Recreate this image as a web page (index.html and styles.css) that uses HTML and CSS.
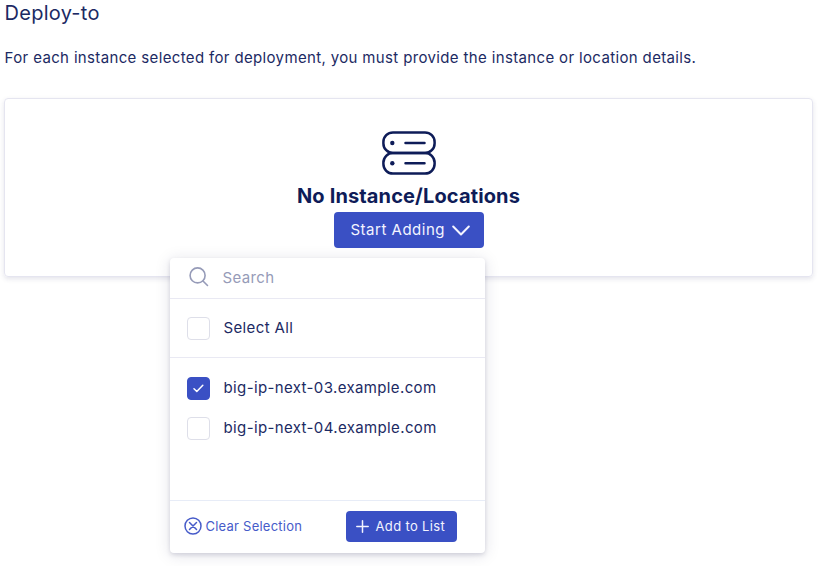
FILE: index.html
```html
<!DOCTYPE html>
<html lang="en">
<head>
<meta charset="utf-8">
<title>Deploy-to</title>
<link rel="stylesheet" href="styles.css">
</head>
<body>
<main class="page">
  <h1 class="title"><span>Deploy-to</span></h1>
  <p class="description"><span>For each instance selected for deployment, you must provide the instance or location details.</span></p>
  <section class="card">
    <svg class="server-icon" viewBox="0 0 54 44" fill="none" stroke="currentColor" stroke-width="2.5" stroke-linecap="round">
      <rect x="1.4" y="1.4" width="51.2" height="20.6" rx="9.6"/>
      <rect x="1.4" y="22" width="51.2" height="20.6" rx="9.6"/>
      <path d="M23.5 12H42.5M23.5 32.3H42.5"/>
      <circle cx="10.3" cy="12" r="2.2" fill="currentColor" stroke="none"/>
      <circle cx="10.3" cy="32.3" r="2.2" fill="currentColor" stroke="none"/>
    </svg>
    <h2 class="empty-title"><span>No Instance/Locations</span></h2>
    <div class="dropdown">
      <button class="button start"><span>Start Adding</span>
        <svg width="18" height="12" viewBox="0 0 18 12" fill="none" stroke="currentColor" stroke-width="2" stroke-linecap="round" stroke-linejoin="round"><path d="M1.2 2.5L9 10.5L16.8 2.5"/></svg>
      </button>
      <div class="menu">
        <div class="search">
          <svg width="20" height="20" viewBox="0 0 20 20" fill="none" stroke="currentColor" stroke-width="1.6" stroke-linecap="round"><circle cx="8.6" cy="8.4" r="7.5"/><path d="M14 14L18.5 18.5"/></svg>
          <span>Search</span>
        </div>
        <div class="all option"><span class="box"></span><span class="label-all">Select All</span></div>
        <div class="options">
          <div class="option"><span class="box checked"><svg width="11" height="9" viewBox="0 0 11 9" fill="none" stroke="currentColor" stroke-width="1.5" stroke-linecap="round" stroke-linejoin="round"><path d="M1 4.8L3.8 7.5L9.8 1.2"/></svg></span><span class="label">big-ip-next-03.example.com</span></div>
          <div class="option"><span class="box"></span><span class="label">big-ip-next-04.example.com</span></div>
        </div>
        <div class="footer">
          <button class="clear"><svg width="18" height="18" viewBox="0 0 18 18" fill="none" stroke="currentColor" stroke-width="1.5" stroke-linecap="round"><circle cx="9" cy="9" r="8"/><path d="M5.5 5.5L12.5 12.5M12.5 5.5L5.5 12.5"/></svg><span>Clear Selection</span></button>
          <button class="button add"><svg width="13" height="13" viewBox="0 0 13 13" fill="none" stroke="currentColor" stroke-width="1.5" stroke-linecap="round"><path d="M6.5 .8V12.2M.8 6.5H12.2"/></svg><span>Add to List</span></button>
        </div>
      </div>
    </div>
  </section>
</main>
</body>
</html>
```
FILE: styles.css
```css
* { box-sizing: border-box; }
body { margin: 0; background: #fff; color: #1c2a63; font-family: Inter, sans-serif; font-size: 15px; }
svg { display: block; flex: none; }
button { border: 0; padding: 0; font: inherit; background: none; }
.page { width: 819px; height: 566px; padding: 0 6px 0 4px; overflow: hidden; }
.title { margin: 0; padding-left: .6px; height: 26px; line-height: 26px; font-size: 20px; font-weight: 400; letter-spacing: .25px; }
.description { margin: 20px 0 0; padding-left: .6px; height: 24px; line-height: 24px; white-space: nowrap; letter-spacing: .355px; }
.card { height: 179px; margin-top: 28px; border: 1px solid #e5e5f0; border-radius: 4px; box-shadow: 0 2px 5px rgba(30, 30, 90, .12); display: flex; flex-direction: column; align-items: center; padding-top: 32px; }
.server-icon { width: 54px; height: 44px; color: #0e1c58; }
.empty-title { margin: 8px 0 3px; height: 26px; line-height: 26px; font-size: 20px; font-weight: 700; color: #0e1c58; letter-spacing: .13px; }
.dropdown { position: relative; }
.button { display: flex; align-items: center; background: #3a50c4; color: #f3f4ff; border-radius: 4px; }
.start { width: 150px; height: 36px; padding: 0 0 1px 17px; gap: 7px; letter-spacing: .5px; white-space: nowrap; }
.menu { position: absolute; right: -1px; top: 46px; width: 315px; height: 295px; border-radius: 4px; background: #fff; box-shadow: 0 2px 4px rgba(30, 30, 80, .14), 0 2px 16px rgba(30, 30, 80, .13); }
.search { height: 41px; padding: 0 0 2px 19px; display: flex; align-items: center; gap: 14px; border-bottom: 1px solid #e9e9f3; color: #969bb8; letter-spacing: .35px; }
.option { display: flex; align-items: center; gap: 14px; padding-left: 17px; height: 40px; letter-spacing: .37px; }
.option > span:last-child { padding-bottom: 2px; }
.all.option { height: 59px; border-bottom: 1px solid #e9e9f3; }
.options { height: 142px; padding-top: 10px; }
.box { width: 23px; height: 23px; border: 1px solid #dedfe9; border-radius: 4px; display: flex; align-items: center; justify-content: center; }
.box.checked { background: #3a50c4; border-color: #3a50c4; color: #fff; }
.footer { height: 53px; border-top: 1px solid #e7ecf7; padding: 0 28px 2px 14px; display: flex; align-items: center; justify-content: space-between; font-size: 13px; }
.clear { display: flex; align-items: center; gap: 4px; color: #465bc9; letter-spacing: .23px; }
.add { width: 111px; height: 31px; padding-left: 10px; gap: 7px; letter-spacing: .35px; }
```
